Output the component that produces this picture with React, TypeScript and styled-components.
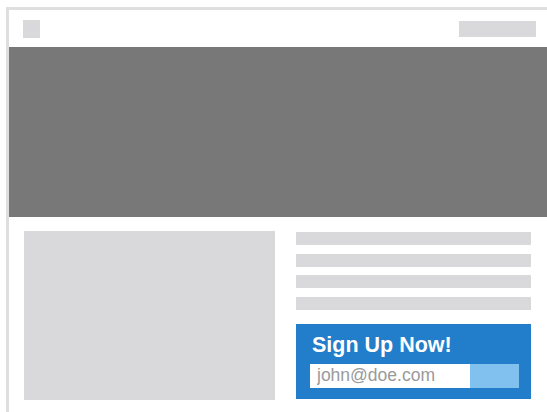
import React from 'react';
import styled, { createGlobalStyle } from 'styled-components';

const GlobalStyle = createGlobalStyle`
  html, body {
    margin: 0;
    padding: 0;
    background: #ffffff;
    overflow: hidden;
  }
  body {
    font-family: "Liberation Sans", Arial, Helvetica, sans-serif;
  }
`;

const Frame = styled.div`
  margin: 7px 0 0 6px;
  border-top: 3px solid #dfdfdf;
  border-left: 3px solid #dfdfdf;
  height: 420px;
  background: #ffffff;
`;

const Header = styled.header`
  display: flex;
  justify-content: space-between;
  align-items: flex-start;
  height: 37px;
  padding: 10px 11px 0 14px;
  box-sizing: border-box;
`;

const Logo = styled.div`
  width: 17px;
  height: 18px;
  background: #d9d9db;
`;

const Nav = styled.div`
  width: 77px;
  height: 16px;
  margin-top: 1px;
  background: #d9d9db;
`;

const Hero = styled.div`
  height: 170px;
  background: #787878;
`;

const Content = styled.main`
  display: flex;
  gap: 21px;
  padding: 14px 0 0 15px;
`;

const Picture = styled.div`
  width: 251px;
  height: 169px;
  background: #d9d9db;
`;

const Side = styled.div`
  width: 235px;
  display: flex;
  flex-direction: column;
  padding-top: 1px;
`;

const Lines = styled.div`
  display: flex;
  flex-direction: column;
  gap: 8.67px;
  margin-bottom: 14px;
`;

const Line = styled.div`
  height: 13px;
  background: #d9d9db;
`;

const SignUp = styled.form`
  background: #227dca;
  height: 75px;
  box-sizing: border-box;
  padding: 9px 12px 0 14px;
`;

const Title = styled.h2`
  margin: 0 0 7px 2px;
  font-size: 21.5px;
  line-height: 24px;
  font-weight: 700;
  color: #ffffff;
`;

const Row = styled.div`
  display: flex;
  height: 24px;
`;

const Email = styled.input`
  width: 160px;
  height: 24px;
  box-sizing: border-box;
  border: none;
  outline: none;
  padding: 0 0 0 7px;
  margin: 0;
  font-family: "Liberation Sans", Arial, sans-serif;
  font-size: 17.5px;
  color: #555;
  background: #ffffff;

  &::placeholder {
    color: #9a9a9a;
  }
`;

const Submit = styled.button`
  width: 49px;
  height: 24px;
  border: none;
  padding: 0;
  margin: 0;
  background: #80c1ef;
`;

const lines = [0, 1, 2, 3];

export default function App() {
  return (
    <>
      <GlobalStyle />
      <Frame>
        <Header>
          <Logo />
          <Nav />
        </Header>
        <Hero />
        <Content>
          <Picture />
          <Side>
            <Lines>
              {lines.map((i) => (
                <Line key={i} />
              ))}
            </Lines>
            <SignUp onSubmit={(e) => e.preventDefault()}>
              <Title>Sign Up Now!</Title>
              <Row>
                <Email type="email" placeholder="john@doe.com" />
                <Submit type="submit" aria-label="Sign up" />
              </Row>
            </SignUp>
          </Side>
        </Content>
      </Frame>
    </>
  );
}
